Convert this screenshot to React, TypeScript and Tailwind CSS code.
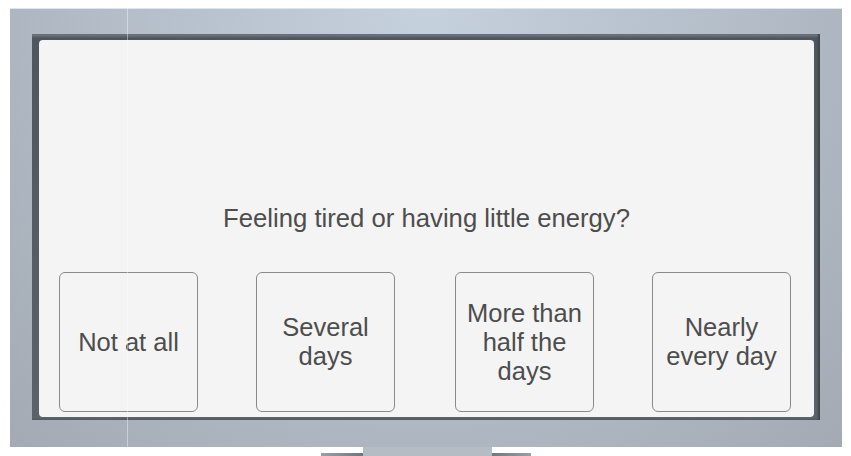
import React from "react";

const options = [
  { t: "Not at all", m: "ml-0" },
  { t: "Several days", m: "ml-[58px]" },
  { t: "More than half the days", m: "ml-[60px]" },
  { t: "Nearly every day", m: "ml-[58px]" },
];

export default function App() {
  return (
    <div className="relative w-[851px] h-[456px] bg-white overflow-hidden" style={{ fontFamily: '"Liberation Sans", Arial, sans-serif' }}>
      <div className="flex flex-col items-center pt-[8px] pl-[10px] w-[842px]">
        <div className="w-[832px] h-[439px] pt-[26px] pl-[22px] pr-[22px] pb-[27px] bg-[radial-gradient(ellipse_at_50%_0%,#c5d1dd_0%,#b3bcc7_55%,#a3aab4_100%)] shadow-[inset_0_1px_0_#dfe5ea]">
          <div className="w-full h-full pl-[7px] pt-[6px] pr-[6px] pb-[3px] bg-[linear-gradient(to_bottom,#7d858e_0px,#4f565e_4px,#5b626a_100%)] shadow-[inset_-2px_0_2px_#3f454c]">
            <div className="w-full h-full rounded-[4px] bg-[#f4f4f4] flex flex-col justify-end pb-[5px]">
              <div className="text-center text-[25.7px] leading-[28px] text-[#4d4d4d]">
                Feeling tired or having little energy?
              </div>
              <div className="flex pl-[20px] mt-[40px]">
                {options.map((o) => (
                  <div
                    key={o.t}
                    className={`${o.m} w-[139px] h-[140px] shrink-0 rounded-[6px] border border-[#8a8a8a] flex items-center justify-center px-[8px] text-center text-[25.5px] leading-[29px] text-[#4d4d4d]`}
                  >
                    {o.t}
                  </div>
                ))}
              </div>
            </div>
          </div>
        </div>
        <div className="flex items-end">
          <div className="w-[42px] h-[3px] bg-[linear-gradient(to_right,#9aa0a7,#6f767e)]" />
          <div className="w-[129px] h-[9px] bg-[#b6bcc4]" />
          <div className="w-[39px] h-[3px] bg-[linear-gradient(to_right,#6f767e,#9aa0a7)]" />
        </div>
      </div>
      <div className="absolute left-[127px] top-[8px] w-[1px] h-[439px] bg-white/40" />
    </div>
  );
}
